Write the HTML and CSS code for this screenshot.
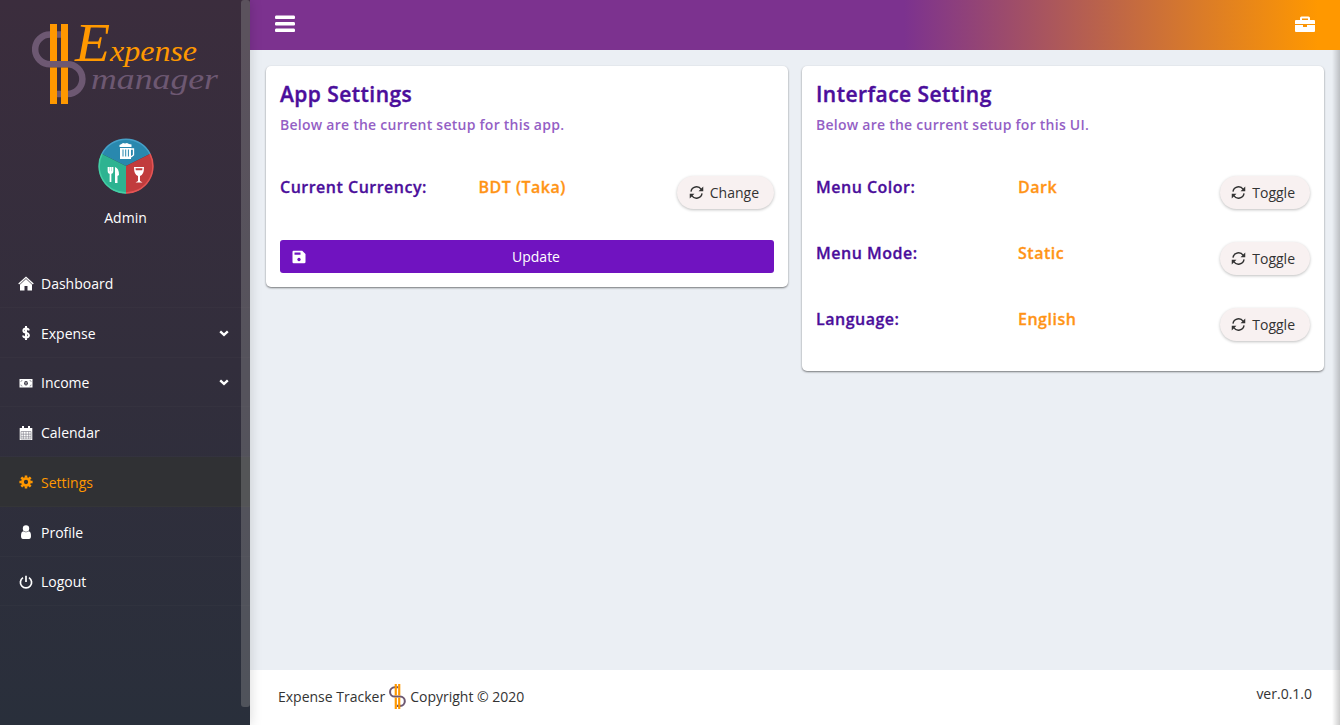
FILE: index.html
```
<!DOCTYPE html>
<html lang="en">
<head>
<meta charset="utf-8">
<title>Expense Manager</title>
<link rel="stylesheet" href="styles.css">
</head>
<body>
<svg class="defs" aria-hidden="true">
  <symbol id="refresh" viewBox="0 0 16 16">
    <path d="M2.1 7A6 6 0 0 1 13 4.6M13.9 9A6 6 0 0 1 3 11.4" fill="none" stroke="currentColor" stroke-width="1.5"/>
    <path d="M15.2 1.6V6.600H10.200zM.8 14.400V9.400H5.800z" fill="currentColor"/>
  </symbol>
  <symbol id="chevron" viewBox="0 0 10 7">
    <path d="M1.200 1.300L5 4.800L8.800 1.300" fill="none" stroke="currentColor" stroke-width="2.400"/>
  </symbol>
  <symbol id="dollar" viewBox="0 0 54 80">
    <path d="M29 10.500H18A14.700 14.700 0 0 0 18 40.200H35.500A14.900 14.900 0 0 1 35.500 70H25" fill="none" stroke="#6d5872" stroke-width="6.500"/>
    <path d="M18 0h7v37h-7zM29 0h7v37h-7zM18 43.500h7V80h-7zM29 43.500h7V80h-7z" fill="#ff9800"/>
  </symbol>
</svg>
<div class="app">
  <aside class="sidebar">
    <svg class="logo" viewBox="0 0 190 84" aria-label="Expense manager">
      <use href="#dollar" width="54" height="80"/>
      <text class="logo-top" x="43" y="37" textLength="122" lengthAdjust="spacingAndGlyphs"><tspan class="logo-cap">E</tspan>xpense</text>
      <text class="logo-bottom" x="59" y="64.500" textLength="127" lengthAdjust="spacingAndGlyphs">manager</text>
    </svg>
    <div class="user">
      <svg class="avatar" viewBox="0 0 56 56">
        <path d="M28 28L3.600 15.800A27.500 27.500 0 0 1 52.400 15.800z" fill="#2988ae"/>
        <path d="M28 28L52.400 15.800A27.500 27.500 0 0 1 28 55.500z" fill="#c13c3d"/>
        <path d="M28 28V55.500A27.500 27.500 0 0 1 3.600 15.800z" fill="#2db391"/>
        <g fill="none" stroke-width="1.500">
          <path d="M4 15.800A27 27 0 0 1 52 15.800" stroke="#46a0c8"/>
          <path d="M52 15.800A27 27 0 0 1 28 55" stroke="#e35555"/>
          <path d="M28 55A27 27 0 0 1 4 15.800" stroke="#45cea5"/>
        </g>
        <path d="M22 10h11v11H22zM21.500 9V7l2-1 1.500-1 2 .5 2-.5 2 1 2.500.5V9z" fill="#fff"/>
        <path d="M33 11h2.500v6L33 19" fill="none" stroke="#fff" stroke-width="1.300"/>
        <path d="M25 11.500v7M27.700 11.500v7M30.400 11.500v7" stroke="#2988ae" stroke-width="1"/>
        <path d="M10.500 29v4q0 2 2 2t2-2v-4M12.500 29v15" fill="none" stroke="#fff" stroke-width="1.700"/>
        <path d="M17 29q4 1 4 8l-1.500 1v7H17z" fill="#fff"/>
        <path d="M36 29h10q0 8-4 9v5l2.500 1.500h-7L40 43v-5q-4-1-4-9z" fill="#fff"/>
        <path d="M37.500 30.300h7l-.3 2h-6.400z" fill="#c13c3d"/>
      </svg>
      <span>Admin</span>
    </div>
    <nav class="menu">
      <a class="item"><svg class="icon home" viewBox="0 0 16 15"><path d="M8 2.500L14 8v6.500H9.500V10h-3v4.500H2V8z" fill="#fff"/><path d="M.7 8L8 1.300L15.300 8" fill="none" stroke="#fff" stroke-width="1.300"/><path d="M1.800 8.700L8 3.100L14.200 8.700" fill="none" stroke="#34303c" stroke-width=".4"/></svg>Dashboard</a>
      <a class="item"><svg class="icon" viewBox="0 0 14 14"><path d="M9.800 4.500Q9.500 2.500 7 2.500T4.400 4.500Q4.400 6.300 7 6.800T9.900 9.400Q9.700 11.500 7 11.500T4.100 9.500M7 0v14" fill="none" stroke="#fff" stroke-width="2"/></svg>Expense<svg class="arrow"><use href="#chevron"/></svg></a>
      <a class="item"><svg class="icon" viewBox="0 0 14 14"><path d="M.5 3h13v8.500H.5z" fill="#fff"/><path d="M1.500 5.500q1.500 0 1.500-1.500M11 4q0 1.500 1.500 1.500M1.500 9Q3 9 3 10.500M11 10.500Q11 9 12.500 9" fill="none" stroke="#777581" stroke-width=".7"/><ellipse cx="7" cy="7.300" rx="1.800" ry="2.200" fill="#322f3c"/><path d="M7 6v2.600" stroke="#fff" stroke-width=".8"/></svg>Income<svg class="arrow"><use href="#chevron"/></svg></a>
      <a class="item"><svg class="icon" viewBox="0 0 14 14"><path d="M.7 2h12.600v12H.7zM3 0h2v3H3zM9 0h2v3H9z" fill="#fff"/><path d="M2 5.500h10M2 8.200h10M2 10.800h10M4.300 5.500v7.500M7 5.500v7.500M9.700 5.500v7.500M2 5.500v7.500M12 5.500v7.500M2 13h10" fill="none" stroke="#777581" stroke-width=".6"/></svg>Calendar</a>
      <a class="item active"><svg class="icon" viewBox="0 0 14 14"><circle cx="7" cy="7" r="3.500" fill="none" stroke="currentColor" stroke-width="2.700"/><path d="M7 .4v2.400M7 11.200v2.400M.4 7h2.400M11.200 7h2.400M2.300 2.300L4 4M10 10l1.700 1.700M2.300 11.700L4 10M10 4l1.700-1.700" stroke="currentColor" stroke-width="2.500"/></svg>Settings</a>
      <a class="item"><svg class="icon" viewBox="0 0 14 14"><circle cx="7" cy="3.500" r="3.200" fill="#fff"/><path d="M4.300 6.200Q2 6.500 2 11q0 3 2 3h6q2 0 2-3 0-4.500-2.300-4.800Q7 8.300 4.300 6.200z" fill="#fff"/></svg>Profile</a>
      <a class="item"><svg class="icon" viewBox="0 0 14 14"><path d="M4 2.600A5.600 5.600 0 1 0 10 2.600M7 .8V7" fill="none" stroke="#fff" stroke-width="1.700"/></svg>Logout</a>
    </nav>
    <div class="scroll"></div>
  </aside>
  <div class="main">
    <header class="topbar">
      <svg width="20" height="18" viewBox="0 0 20 18"><path d="M1 .5h18q1 0 1 1.500v1q0 1-1 1H1Q0 4 0 3V2Q0 .5 1 .500zM1 7h18q1 0 1 1.500v1q0 1-1 1H1q-1 0-1-1v-1Q0 7 1 7zM1 13.500h18q1 0 1 1.500v1q0 1-1 1H1q-1 0-1-1v-1q0-1.500 1-1.500z" fill="#fff"/></svg>
      <svg width="20" height="17" viewBox="0 0 20 17"><path fill-rule="evenodd" d="M0 9h8v2h4V9h8v6q0 1-1 1H1q-1 0-1-1zM1 4h4V2q0-1.500 1.500-1.500h7Q15 .5 15 2v2h4q1 0 1 1v3H0V5q0-1 1-1zM7 4h6V2.500H7z" fill="#fff"/></svg>
    </header>
    <main class="content">
      <section class="card">
        <h1>App Settings</h1>
        <p class="sub">Below are the current setup for this app.</p>
        <div class="row currency"><span class="label">Current Currency:</span><span class="value">BDT (Taka)</span><button class="pill"><svg><use href="#refresh"/></svg>Change</button></div>
        <button class="update"><svg viewBox="0 0 14 14"><path fill-rule="evenodd" d="M1.500.7h8.700l3.300 3.300v8q0 1.300-1.300 1.300H1.500Q.5 13.300.5 12V2Q.5.700 1.500.700zM2.500 2.500v2.300h6V2.500zM7 7.800a1.700 1.700 0 1 0 .01 0z" fill="#fff"/></svg>Update</button>
      </section>
      <section class="card">
        <h1>Interface Setting</h1>
        <p class="sub">Below are the current setup for this UI.</p>
        <div class="row"><span class="label">Menu Color:</span><span class="value">Dark</span><button class="pill toggle"><svg><use href="#refresh"/></svg>Toggle</button></div>
        <div class="row"><span class="label">Menu Mode:</span><span class="value">Static</span><button class="pill toggle"><svg><use href="#refresh"/></svg>Toggle</button></div>
        <div class="row last"><span class="label">Language:</span><span class="value">English</span><button class="pill toggle"><svg><use href="#refresh"/></svg>Toggle</button></div>
      </section>
    </main>
    <footer class="footer">
      <div class="copy"><span>Expense Tracker</span><svg class="mark"><use href="#dollar"/></svg><span>Copyright © 2020</span></div>
      <span class="version">ver.0.1.0</span>
    </footer>
    <div class="edge"></div>
  </div>
</div>
</body>
</html>
```
FILE: styles.css
```
* { box-sizing: border-box; }
body { margin: 0; font: 14px/19px "Open Sans", sans-serif; color: #333; }
.defs { position: absolute; width: 0; height: 0; }
.app { display: flex; width: 1340px; height: 725px; overflow: hidden; }
.sidebar { position: relative; z-index: 2; width: 250px; flex: none; background: linear-gradient(#3b2d3d, #292f3b); color: #fff; box-shadow: 0 0 12px rgba(0,0,0,.16); }
.logo { display: block; width: 190px; height: 84px; margin: 24px 0 0 32px; overflow: visible; }
.logo-top, .logo-bottom { font-family: "Liberation Serif", serif; font-style: italic; }
.logo-top { font-size: 30px; fill: #ff9800; }
.logo-cap { font-size: 54px; }
.logo-bottom { font-size: 30px; fill: #6d5872; }
.user { display: flex; flex-direction: column; align-items: center; width: 251px; margin-top: 30px; }
.avatar { width: 56px; height: 56px; margin-bottom: 14px; }
.menu { margin-top: 31px; }
.item { display: flex; align-items: center; height: 49.75px; padding: 2px 21px 0 18px; border-bottom: 1px solid rgba(255,255,255,.02); }
.item.active { color: #ff9800; background: #303134; }
.icon { width: 14px; height: 14px; margin: 0 8.500px 0 .5px; }
.icon.home { width: 16px; height: 15px; margin: 0 7.500px 0 -.5px; }
.arrow { width: 10px; height: 7px; margin-left: auto; }
.scroll { position: absolute; top: 0; right: 0; width: 9px; height: 707px; border-radius: 3px; background: #9998; opacity: .65; }
.main { position: relative; display: flex; flex-direction: column; flex: 1; background: #ebeff4; }
.topbar { display: flex; justify-content: space-between; align-items: center; height: 50px; padding: 0 25px 2px; background: linear-gradient(90deg, #7c328f 60%, #ff9800 98%); }
.content { display: grid; grid-template-columns: 522px 522px; gap: 14px; align-items: start; flex: 1; padding: 16px; }
.card { padding: 14px; border-radius: 5px; background: #fff; box-shadow: 0 1px 2px rgba(0,0,0,.5); }
h1 { margin: 0; font-size: 21px; line-height: 29px; font-weight: 600; letter-spacing: .45px; color: #4b0e9b; -webkit-text-stroke: .4px; }
.sub { margin: 6px 0 42px; font-weight: 600; letter-spacing: .25px; line-height: 19px; color: #945fc5; }
.row { display: grid; grid-template-columns: 202px 1fr auto; height: 66px; align-items: start; font-size: 16px; line-height: 22px; font-weight: 600; letter-spacing: .5px; }
.row.last { height: 49px; }
.currency { grid-template-columns: 198.500px 1fr auto; height: 64px; }
.label, .value { -webkit-text-stroke: .3px; }
.label { color: #4b0e9b; }
.value { color: #ff9416; }
.pill { display: flex; align-items: center; height: 33px; padding: 0 15px 0 12px; border: 0; border-radius: 17px; background: #f8f1f1; box-shadow: 0 1px 3px rgba(0,0,0,.25); font: 14px "Open Sans", sans-serif; letter-spacing: 0; color: #333; }
.pill.toggle { padding-left: 11.500px; }
.pill svg { width: 15px; height: 15px; margin-right: 6px; }
.update { display: flex; position: relative; justify-content: center; align-items: center; width: 494px; height: 33px; padding: 0 0 0 18px; border: 0; border-radius: 3px; background: #7013c0; color: #fff; font: 14px "Open Sans", sans-serif; }
.update svg { position: absolute; left: 12px; width: 14px; height: 14px; }
.footer { display: flex; justify-content: space-between; height: 55px; padding: 14px 28px; background: #fff; }
.copy { display: flex; align-items: center; height: 25px; }
.mark { width: 17px; height: 25px; margin: 0 4px; }
.version { line-height: 20px; }
.edge { position: absolute; top: 50px; right: 0; bottom: 0; width: 8px; background: linear-gradient(90deg, transparent, rgba(0,0,0,.2)); }
```
